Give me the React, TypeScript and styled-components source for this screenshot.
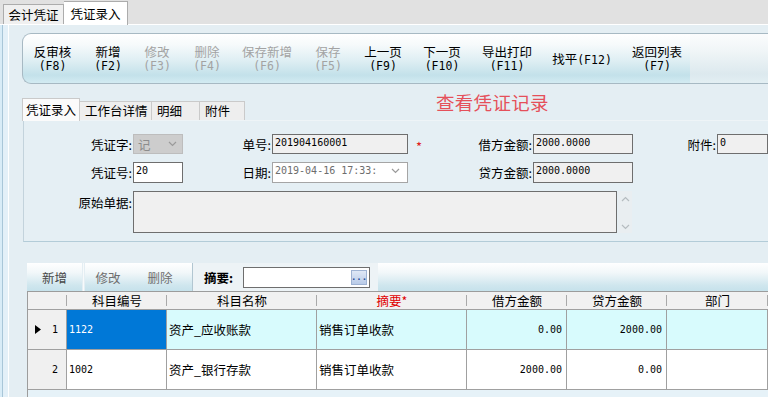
import * as React from 'react';
import styled, { createGlobalStyle } from 'styled-components';

const CJK = '"Noto Sans CJK SC", "Noto Sans", sans-serif';
const MONO = '"DejaVu Sans Mono", "Noto Sans CJK SC", monospace';

const GlobalStyle = createGlobalStyle`
  html, body {
    margin: 0;
    padding: 0;
    background: #e4eef3;
  }
  body {
    font-family: ${CJK};
    font-size: 12px;
    color: #000;
  }
  * { box-sizing: border-box; }
`;

const Page = styled.div`
  width: 768px;
  height: 397px;
  overflow: hidden;
  display: flex;
  flex-direction: column;
`;

const TopTabs = styled.div`
  height: 25px;
  flex: none;
  display: flex;
  align-items: flex-end;
  padding-left: 3px;
  background: #e1e1e1;
  border-bottom: 1px solid #ffffff;
`;

const TopTab = styled.div<{ $active?: boolean; $w: number }>`
  width: ${p => p.$w}px;
  height: ${p => (p.$active ? 24 : 20)}px;
  margin-bottom: ${p => (p.$active ? -1 : 0)}px;
  display: flex;
  align-items: center;
  justify-content: center;
  background: ${p => (p.$active ? '#ffffff' : '#f0f0f0')};
  border: 1px solid #acacac;
  border-bottom: none;
  ${p => (p.$active ? 'border-left: none;' : '')}
  font-size: 12.5px;
  line-height: 14px;
`;

const Frame = styled.div`
  flex: 1;
  display: flex;
  min-height: 0;
`;

const Rail = styled.div`
  width: 9px;
  flex: none;
  background: linear-gradient(to right, #d8ecf7 0 2px, #a8c6d8 2px 3px, #e3f0f8 3px 8px, #ffffff 8px 9px);
`;

const Main = styled.div`
  flex: 1;
  min-width: 0;
  display: flex;
  flex-direction: column;
  padding: 8px 0 0 13px;
  background: #e4eef3;
`;

const Toolbar = styled.div`
  height: 51px;
  flex: none;
  display: flex;
  border: 1px solid #a7b9c3;
  border-right: none;
  border-radius: 9px 0 0 9px;
  overflow: hidden;
  background: linear-gradient(#ffffff 0%, #f6fafb 22%, #deeef3 55%, #c3e1ea 84%, #d3ebf2 100%);
`;

const ToolButton = styled.div<{ $w: number; $disabled?: boolean }>`
  width: ${p => p.$w}px;
  flex: none;
  display: flex;
  flex-direction: column;
  align-items: center;
  justify-content: center;
  gap: 2px;
  color: ${p => (p.$disabled ? '#a3a3a3' : '#000000')};
  font-size: 12.5px;
  white-space: nowrap;
`;

const ToolLabel = styled.span`
  display: block;
  line-height: 12px;
  height: 12px;
`;

const KeyHint = styled.span`
  font-family: ${MONO};
  font-size: 11.5px;
  line-height: 12px;
`;

const ToolFiller = styled.div`
  flex: 1;
  background: linear-gradient(#fbfcfd 0%, #f0f5f7 35%, #dce9ee 82%, #e3eff3 100%);
`;

const SubTabRow = styled.div`
  height: 28px;
  flex: none;
  margin-top: 8px;
  display: flex;
  align-items: flex-end;
`;

const SubTab = styled.div<{ $active?: boolean; $w: number }>`
  width: ${p => p.$w}px;
  height: ${p => (p.$active ? 23 : 19)}px;
  flex: none;
  display: flex;
  align-items: center;
  padding-left: ${p => (p.$active ? 3 : 5)}px;
  background: ${p => (p.$active ? '#fbfbfb' : '#eeeeee')};
  border: 1px solid #cacaca;
  border-bottom: none;
  ${p => (p.$active ? '' : 'border-left: none;')}
  font-size: 12.5px;
  line-height: 14px;
  position: relative;
  z-index: ${p => (p.$active ? 1 : 0)};
  margin-bottom: ${p => (p.$active ? -1 : 0)}px;
`;

const ViewTitle = styled.div`
  align-self: flex-start;
  margin-left: 191px;
  color: #e5505a;
  font-size: 18.5px;
  line-height: 20px;
  letter-spacing: 0.3px;
`;

const Panel = styled.div`
  height: 122px;
  flex: none;
  margin-left: 1px;
  padding-top: 13px;
  border-left: 1px solid #c3d3dc;
  border-top: 1px solid #eef4f7;
  border-bottom: 1px solid #b3ccd8;
  background: #e5eff4;
`;

const FormGrid = styled.div`
  display: grid;
  grid-template-columns: 109px 50px 89px 136px 125px 100px 84px 1fr;
  grid-template-rows: 20px 21px 42px;
  row-gap: 8px;
`;

const Label = styled.div<{ $top?: boolean }>`
  display: flex;
  align-items: ${p => (p.$top ? 'flex-start' : 'center')};
  justify-content: flex-end;
  padding-right: 1px;
  padding-top: ${p => (p.$top ? 2 : 0)}px;
  font-size: 12.5px;
  white-space: nowrap;
`;

const StarLabel = styled(Label)`
  justify-content: space-between;
  padding-left: 8px;
`;

const Star = styled.span`
  color: #e02020;
  font-size: 13px;
  margin-top: 4px;
`;

const Field = styled.div<{ $bg?: string; $color?: string; $border?: string }>`
  position: relative;
  border: 1px solid ${p => p.$border || '#6e6e6e'};
  background: ${p => p.$bg || '#f0f0f0'};
  color: ${p => p.$color || '#000000'};
  font-family: ${MONO};
  font-size: 10px;
  line-height: 13px;
  padding: 1px 2px;
  white-space: nowrap;
  overflow: hidden;
`;

const SelectBox = styled.div`
  display: flex;
  align-items: center;
  justify-content: space-between;
  padding: 0 5px 0 4px;
  background: #cdcdcd;
  border: 1px solid #bdbdbd;
  color: #8c8c8c;
  font-size: 12.5px;
`;

const ChevronSlot = styled.span`
  position: absolute;
  right: 7px;
  top: 5px;
  display: flex;
`;

const MemoRow = styled.div`
  grid-column: 2 / -1;
  display: flex;
`;

const MemoBox = styled.div`
  width: 484px;
  height: 42px;
  border: 1px solid #6e6e6e;
  background: #f0f0f0;
`;

const MemoScroll = styled.div`
  width: 14px;
  margin-left: 1px;
  display: flex;
  flex-direction: column;
  justify-content: space-between;
  align-items: center;
  padding: 5px 0 3px;
  background: #e9eef1;
`;

const GridBar = styled.div`
  height: 28px;
  flex: none;
  margin: 21px 0 0 5px;
  display: flex;
`;

const BarButton = styled.div<{ $w: number; $muted?: boolean }>`
  width: ${p => p.$w}px;
  flex: none;
  display: flex;
  align-items: center;
  justify-content: center;
  color: ${p => (p.$muted ? '#6f6f6f' : '#474747')};
  font-size: 12.5px;
  background: linear-gradient(#ffffff 0%, #f1f7f9 35%, #cfe6ee 80%, #c6e2eb 100%);
`;

const BarGap = styled.div`
  width: 3px;
  flex: none;
  background: linear-gradient(to right, #e4eef3 0 1px, #f7fafb 1px 2px, #e4eef3 2px);
`;

const BarGroup = styled.div`
  display: flex;
  padding-right: 3px;
  background: linear-gradient(#ffffff 0%, #f1f7f9 35%, #cfe6ee 80%, #c6e2eb 100%);
  border-right: 1px solid #b2c6d1;
`;

const SummaryArea = styled.div`
  width: 185px;
  flex: none;
  display: flex;
  align-items: center;
  padding-left: 11px;
  background: #edf3f6;
`;

const SummaryLabel = styled.span`
  font-size: 12.5px;
  font-weight: 700;
  width: 39px;
`;

const SummaryInput = styled.div`
  width: 127px;
  height: 21px;
  display: flex;
  justify-content: flex-end;
  align-items: center;
  padding-right: 2px;
  background: #ffffff;
  border: 1px solid #6e6e6e;
`;

const EllipsisButton = styled.div`
  width: 16px;
  height: 15px;
  display: flex;
  align-items: center;
  justify-content: center;
  background: linear-gradient(#dfe8f6, #b9cbe8);
  border: 1px solid #9fb3d3;
  color: #2a4f9a;
  font-family: ${MONO};
  font-size: 9px;
  line-height: 8px;
  font-weight: 700;
`;

const BarFiller = styled.div`
  flex: 1;
  background: linear-gradient(#ffffff 0%, #f1f7f9 35%, #cfe6ee 80%, #c6e2eb 100%);
`;

const DataGrid = styled.div`
  flex: 1;
  margin-left: 5px;
  border-left: 1px solid #9c9c9c;
  border-top: 1px solid #9c9c9c;
  background: #e6f2f8;
  display: grid;
  grid-template-columns: 39px 100px 150px 150px 100px 100px 101px;
  grid-template-rows: 18px 40px 40px;
  align-content: start;
`;

const HeadCell = styled.div<{ $red?: boolean }>`
  position: relative;
  display: flex;
  align-items: center;
  justify-content: center;
  background: #f1f1f1;
  border-bottom: 1px solid #a0a0a0;
  color: ${p => (p.$red ? '#e00000' : '#000000')};
  font-size: 12.5px;
  line-height: 14px;
  &::after {
    content: '';
    position: absolute;
    right: 0;
    top: 3px;
    bottom: 3px;
    width: 1px;
    background: #a9a9a9;
  }
`;

const RowHead = styled.div`
  display: flex;
  align-items: center;
  justify-content: space-between;
  padding: 0 8px 0 7px;
  background: #f0f0f0;
  border-right: 1px solid #a0a0a0;
  border-bottom: 1px solid #a0a0a0;
  font-family: ${MONO};
  font-size: 10px;
`;

const Cell = styled.div<{ $bg: string; $num?: boolean; $mono?: boolean; $selected?: boolean }>`
  display: flex;
  align-items: center;
  justify-content: ${p => (p.$num ? 'flex-end' : 'flex-start')};
  padding: ${p => (p.$num ? '0 4px 0 2px' : '0 2px')};
  background: ${p => (p.$selected ? '#0078d7' : p.$bg)};
  color: ${p => (p.$selected ? '#ffffff' : '#000000')};
  border-right: 1px solid #a0a0a0;
  border-bottom: 1px solid #a0a0a0;
  font-family: ${p => (p.$num || p.$mono ? MONO : CJK)};
  font-size: ${p => (p.$num || p.$mono ? 10 : 12.5)}px;
  white-space: nowrap;
  overflow: hidden;
`;

const Chevron = ({ up = false, color = '#8a8a8a' }: { up?: boolean; color?: string }) => (
  <svg width="9" height="6" viewBox="0 0 9 6">
    <polyline
      points={up ? '1,5 4.5,1.5 8,5' : '1,1 4.5,4.5 8,1'}
      fill="none"
      stroke={color}
      strokeWidth="1.2"
    />
  </svg>
);

const Pointer = () => (
  <svg width="6" height="9" viewBox="0 0 6 9">
    <polygon points="0,0 6,4.5 0,9" fill="#000" />
  </svg>
);

const tools = [
  { label: '反审核', key: '(F8)', w: 59 },
  { label: '新增', key: '(F2)', w: 52 },
  { label: '修改', key: '(F3)', w: 46, disabled: true },
  { label: '删除', key: '(F4)', w: 54, disabled: true },
  { label: '保存新增', key: '(F6)', w: 66, disabled: true },
  { label: '保存', key: '(F5)', w: 56, disabled: true },
  { label: '上一页', key: '(F9)', w: 54 },
  { label: '下一页', key: '(F10)', w: 64 },
  { label: '导出打印', key: '(F11)', w: 66 },
  { label: '找平', key: '(F12)', w: 84, inline: true },
  { label: '返回列表', key: '(F7)', w: 66 }
];

const columns = [
  { title: '' },
  { title: '科目编号' },
  { title: '科目名称' },
  { title: '摘要*', red: true },
  { title: '借方金额' },
  { title: '贷方金额' },
  { title: '部门' }
];

const rows = [
  { no: 1, code: '1122', name: '资产_应收账款', memo: '销售订单收款', debit: '0.00', credit: '2000.00', current: true },
  { no: 2, code: '1002', name: '资产_银行存款', memo: '销售订单收款', debit: '2000.00', credit: '0.00' }
];

export default function App() {
  return (
    <Page>
      <GlobalStyle />
      <TopTabs>
        <TopTab $w={61}>会计凭证</TopTab>
        <TopTab $w={64} $active>凭证录入</TopTab>
      </TopTabs>

      <Frame>
        <Rail />
        <Main>
          <Toolbar>
            {tools.map(t => (
              <ToolButton key={t.label} $w={t.w} $disabled={t.disabled}>
                {t.inline
                  ? <span>{t.label}<KeyHint>{t.key}</KeyHint></span>
                  : <>
                      <ToolLabel>{t.label}</ToolLabel>
                      <KeyHint>{t.key}</KeyHint>
                    </>}
              </ToolButton>
            ))}
            <ToolFiller />
          </Toolbar>

          <SubTabRow>
            <SubTab $w={58} $active>凭证录入</SubTab>
            <SubTab $w={72}>工作台详情</SubTab>
            <SubTab $w={48}>明细</SubTab>
            <SubTab $w={45}>附件</SubTab>
            <ViewTitle>查看凭证记录</ViewTitle>
          </SubTabRow>

          <Panel>
            <FormGrid>
              <Label>凭证字:</Label>
              <SelectBox>
                <span>记</span>
                <Chevron color="#9a9a9a" />
              </SelectBox>
              <Label>单号:</Label>
              <Field>201904160001</Field>
              <StarLabel><Star>*</Star><span>借方金额:</span></StarLabel>
              <Field>2000.0000</Field>
              <Label>附件:</Label>
              <Field>0</Field>

              <Label>凭证号:</Label>
              <Field $bg="#ffffff">20</Field>
              <Label>日期:</Label>
              <Field $bg="#ffffff" $color="#6d6d6d" $border="#a5a5a5">
                2019-04-16 17:33:
                <ChevronSlot><Chevron color="#9a9a9a" /></ChevronSlot>
              </Field>
              <Label>贷方金额:</Label>
              <Field>2000.0000</Field>
              <div />
              <div />

              <Label $top>原始单据:</Label>
              <MemoRow>
                <MemoBox />
                <MemoScroll>
                  <Chevron up color="#b5bcc0" />
                  <Chevron color="#b5bcc0" />
                </MemoScroll>
              </MemoRow>
            </FormGrid>
          </Panel>

          <GridBar>
            <BarButton $w={55}>新增</BarButton>
            <BarGap />
            <BarGroup>
              <BarButton $w={46} $muted>修改</BarButton>
              <BarButton $w={58} $muted>删除</BarButton>
            </BarGroup>
            <SummaryArea>
              <SummaryLabel>摘要:</SummaryLabel>
              <SummaryInput>
                <EllipsisButton>...</EllipsisButton>
              </SummaryInput>
            </SummaryArea>
            <BarFiller />
          </GridBar>

          <DataGrid>
            {columns.map((c, i) => (
              <HeadCell key={i} $red={c.red}>{c.title}</HeadCell>
            ))}
            {rows.map(r => {
              const bg = r.current ? '#d8fbfd' : '#ffffff';
              return (
                <React.Fragment key={r.no}>
                  <RowHead>
                    {r.current ? <Pointer /> : <span />}
                    <span>{r.no}</span>
                  </RowHead>
                  <Cell $bg={bg} $mono $selected={r.current}>{r.code}</Cell>
                  <Cell $bg={bg}>{r.name}</Cell>
                  <Cell $bg={bg}>{r.memo}</Cell>
                  <Cell $bg={bg} $num>{r.debit}</Cell>
                  <Cell $bg={bg} $num>{r.credit}</Cell>
                  <Cell $bg={bg} />
                </React.Fragment>
              );
            })}
          </DataGrid>
        </Main>
      </Frame>
    </Page>
  );
}
